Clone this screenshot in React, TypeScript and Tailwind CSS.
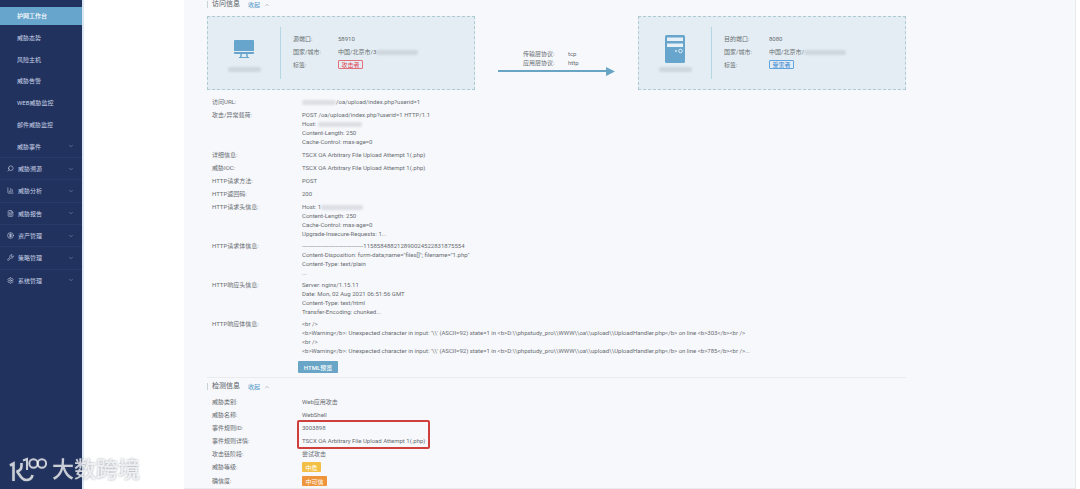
import type { ReactNode } from "react";
import { BarChart3, ChevronDown, ChevronUp, CircleDollarSign, FileText, Search, Settings, Wrench } from "lucide-react";

const subItems = ["护网工作台", "威胁态势", "风险主机", "威胁告警", "WEB威胁监控", "邮件威胁监控", "威胁事件"];

const groups = [
  { label: "威胁溯源", icon: <Search className="size-[7px] -scale-x-100" /> },
  { label: "威胁分析", icon: <BarChart3 className="size-[7px]" /> },
  { label: "威胁报告", icon: <FileText className="size-[7px]" /> },
  { label: "资产管理", icon: <CircleDollarSign className="size-[7px]" /> },
  { label: "策略管理", icon: <Wrench className="size-[7px]" /> },
  { label: "系统管理", icon: <Settings className="size-[7px]" /> },
];

function Sidebar() {
  return (
    <nav className="w-[84px] shrink-0 border-r-2 border-[#dbe8f3] bg-[#21325f] pt-[5px] text-[6px] leading-[9px] text-[#c9d2e6]">
      <ul className="grid h-[152px] auto-rows-fr">
        {subItems.map((item, i) => (
          <li key={item} className="flex items-center">
            <a
              href="#"
              className={
                i === 0
                  ? "flex h-[18px] w-full items-center bg-[#68a5cc] pl-[17px] font-medium text-white"
                  : "flex h-[18px] w-full items-center justify-between pl-[17px] pr-2"
              }
            >
              {item}
              {i === 6 && <ChevronDown className="size-[6px] text-[#8f9dc0]" />}
            </a>
          </li>
        ))}
      </ul>
      <ul className="grid h-[134px] auto-rows-fr">
        {groups.map((g) => (
          <li key={g.label} className="flex border-t border-[#273a69]">
            <a href="#" className="flex w-full items-center gap-1 pl-[7px] pr-2">
              {g.icon}
              <span className="flex-1">{g.label}</span>
              <ChevronDown className="size-[6px] text-[#8f9dc0]" />
            </a>
          </li>
        ))}
      </ul>
    </nav>
  );
}

function Smear({ className }: { className: string }) {
  return <span aria-hidden="true" className={`inline-block h-[5px] rounded-sm bg-[#8c959e]/25 align-middle blur-[1px] ${className}`} />;
}

function SectionTitle({ children }: { children: ReactNode }) {
  return (
    <div className="flex h-[9px] items-center">
      <span className="h-[7px] w-px bg-[#c9d0d6]" />
      <h2 className="ml-1 text-[7px] leading-[9px] text-[#555b61]">{children}</h2>
      <button type="button" className="ml-2 flex items-center gap-1 text-[6px] leading-[9px] text-[#4f97c8]">
        收起
        <ChevronUp strokeWidth={3} className="size-[6px] text-[#a5b4c0]" />
      </button>
    </div>
  );
}

function MonitorIcon() {
  return (
    <svg viewBox="0 0 20 18" className="h-[18px] w-5" fill="#68a5cc">
      <path d="M1 0h18a1 1 0 0 1 1 1v10H0V1a1 1 0 0 1 1-1z" />
      <path d="M0 12h20v1a1 1 0 0 1-1 1H1a1 1 0 0 1-1-1z" />
      <path d="M6.500 14h1.500l-.5 3h5l-.5-3h1.500l.5 3h1v1H5v-1h1z" />
    </svg>
  );
}

function ServerIcon() {
  return (
    <svg viewBox="0 0 20 28" className="h-7 w-5">
      <rect width="20" height="28" rx="1.500" fill="#68a5cc" />
      <rect x="2" y="2.500" width="16" height="3.500" fill="#e6f0f6" />
      <rect x="2" y="8.500" width="16" height="3.500" fill="#e6f0f6" />
      <circle cx="15.500" cy="16" r="1.800" fill="none" stroke="#e6f0f6" strokeWidth=".9" />
      <circle cx="11" cy="16" r=".9" fill="#e6f0f6" />
    </svg>
  );
}

type EndpointProps = { icon: ReactNode; portLabel: string; port: string; city: string; tag: string; danger?: boolean };

function Endpoint({ icon, portLabel, port, city, tag, danger }: EndpointProps) {
  return (
    <div className="flex h-[74px] min-w-0 flex-1 items-center border border-dashed border-[#aecbd3] bg-[#e4edf3]">
      <div className="flex w-[72px] shrink-0 flex-col items-center gap-1">
        <div className="flex h-7 items-center">{icon}</div>
        <Smear className="w-[33px]" />
      </div>
      <dl className="grid h-[52px] grid-cols-[45px_1fr] content-center gap-y-1 border-l border-[#b4d5e2] pb-[3px] pl-3">
        <dt>{portLabel}:</dt>
        <dd>{port}</dd>
        <dt>国家/城市:</dt>
        <dd className="whitespace-nowrap">
          {city}
          <Smear className="w-[42px]" />
        </dd>
        <dt>标签:</dt>
        <dd>
          <span
            className={
              danger
                ? "flex h-[9px] w-[25px] items-center justify-center rounded-[1px] border border-[#e2717c] text-[#e04452]"
                : "flex h-[9px] w-[25px] items-center justify-center rounded-[1px] border border-[#62a4df] text-[#2f80d0]"
            }
          >
            {tag}
          </span>
        </dd>
      </dl>
    </div>
  );
}

function Row({ label, children }: { label: string; children: ReactNode }) {
  return (
    <div className="flex">
      <dt className="w-[90px] shrink-0">{label}:</dt>
      <dd className="relative min-w-0 whitespace-pre-wrap">{children}</dd>
    </div>
  );
}

function Watermark() {
  return (
    <div className="absolute bottom-[7px] left-2 flex items-center gap-[5px] text-white/75 drop-shadow-[0_0_1px_rgba(70,80,100,0.700)]">
      <svg viewBox="0 0 39 25" className="h-[25px] w-[39px]" fill="none" stroke="currentColor" strokeWidth="2.600">
        <path d="M2 8.500l3.500-2V24" />
        <path d="M13.500 6v3c0 3-2.500 5-5 5.500 2.500.5 4 8.500 9.500 8.500 3.500 0 6-2 6.500-5" />
        <path d="M15 3.500l4-1.500v11" strokeWidth="2" />
        <circle cx="25.500" cy="6.500" r="4.200" strokeWidth="2" />
        <circle cx="33.900" cy="6.500" r="4.200" strokeWidth="2" />
      </svg>
      <span className="text-[22px] font-medium leading-6">大数跨境</span>
    </div>
  );
}

export default function App() {
  return (
    <div className="relative flex min-h-screen bg-white font-['Roboto','Noto_Sans_CJK_SC',sans-serif]">
      <Sidebar />
      <main className="ml-[100px] mr-1 min-w-0 flex-1 border-b border-r border-[#e8eaed] bg-[#f7f8fb] pl-[23px] text-[6px] leading-[9px] text-[#686d72]">
        <section>
          <SectionTitle>访问信息</SectionTitle>
          <div className="mt-[7px] flex max-w-[699px] items-center">
            <Endpoint icon={<MonitorIcon />} portLabel="源端口" port="58910" city="中国/北京市/3" tag="攻击者" danger />
            <div className="w-[163px] shrink-0 px-[23px] pt-[18px]">
              <dl className="grid grid-cols-[45px_1fr] pl-[25px]">
                <dt>传输层协议:</dt>
                <dd>tcp</dd>
                <dt>应用层协议:</dt>
                <dd>http</dd>
              </dl>
              <div className="flex items-center">
                <span className="h-[2px] flex-1 bg-[#68a5c4]" />
                <svg viewBox="0 0 9 9" className="size-[9px]" fill="#68a5c4">
                  <path d="M0 0l9 4.500L0 9z" />
                </svg>
              </div>
            </div>
            <Endpoint icon={<ServerIcon />} portLabel="目的端口" port="8080" city="中国/北京市/" tag="受害者" />
          </div>

          <dl className="mt-[7px] flex flex-col gap-1 pl-[5px]">
            <Row label="访问URL">
              <Smear className="w-[34px]" />
              {"/oa/upload/index.php?userid=1"}
            </Row>
            <Row label="攻击/异常载荷">
              {"POST /oa/upload/index.php?userid=1 HTTP/1.1\nHost: "}
              <Smear className="w-[44px]" />
              {"\nContent-Length: 250\nCache-Control: max-age=0"}
            </Row>
            <Row label="详细信息">TSCX OA Arbitrary File Upload Attempt 1(.php)</Row>
            <Row label="威胁IOC">TSCX OA Arbitrary File Upload Attempt 1(.php)</Row>
            <Row label="HTTP请求方法">POST</Row>
            <Row label="HTTP返回码">200</Row>
          </dl>
          <dl className="mt-1 flex flex-col gap-[3px] pl-[5px]">
            <Row label="HTTP请求头信息">
              {"Host: 1"}
              <Smear className="w-[42px]" />
              {"\nContent-Length: 250\nCache-Control: max-age=0\nUpgrade-Insecure-Requests: 1..."}
            </Row>
            <Row label="HTTP请求体信息">
              {'-------------------------------------115858488212890024522831875554\nContent-Disposition: form-data;name="files[]"; filename="1.php"\nContent-Type: text/plain\n...'}
            </Row>
            <Row label="HTTP响应头信息">
              {"Server: nginx/1.15.11\nDate: Mon, 02 Aug 2021 06:51:56 GMT\nContent-Type: text/html\nTransfer-Encoding: chunked..."}
            </Row>
            <Row label="HTTP响应体信息">
              {"<br />\n<b>Warning</b>: Unexpected character in input: '\\\\' (ASCII=92) state=1 in <b>D:\\\\phpstudy_pro\\\\WWW\\\\oa\\\\upload\\\\UploadHandler.php</b> on line <b>303</b><br />\n<br />\n<b>Warning</b>: Unexpected character in input: '\\\\' (ASCII=92) state=1 in <b>D:\\\\phpstudy_pro\\\\WWW\\\\oa\\\\upload\\\\UploadHandler.php</b> on line <b>785</b><br />..."}
            </Row>
          </dl>
          <button type="button" className="ml-[91px] mt-[6px] flex h-3 w-10 items-center justify-center rounded-[1px] bg-[#68a5c6] font-medium text-white">
            HTML预览
          </button>
        </section>

        <section className="mt-1">
          <hr className="mb-1 max-w-[699px] border-[#e9ebef]" />
          <SectionTitle>检测信息</SectionTitle>
          <dl className="mt-[6px] flex flex-col gap-1 pl-[5px]">
            <Row label="威胁类别">Web应用攻击</Row>
            <Row label="威胁名称">WebShell</Row>
            <Row label="事件规则ID">
              3003898
              <span aria-hidden="true" className="absolute -left-[5px] -top-[3px] h-[29px] w-[133px] rounded-[2px] border-2 border-[#cf3f3c]" />
            </Row>
            <Row label="事件规则详情">TSCX OA Arbitrary File Upload Attempt 1(.php)</Row>
            <Row label="攻击链阶段">尝试攻击</Row>
            <Row label="威胁等级">
              <span className="flex h-[10px] w-[19px] items-center justify-center rounded-[1px] bg-[#f3bf45] text-white">中危</span>
            </Row>
            <Row label="确信度">
              <span className="flex h-[10px] w-[25px] items-center justify-center rounded-[1px] bg-[#ee953c] text-white">中可信</span>
            </Row>
          </dl>
        </section>
      </main>
      <Watermark />
    </div>
  );
}
